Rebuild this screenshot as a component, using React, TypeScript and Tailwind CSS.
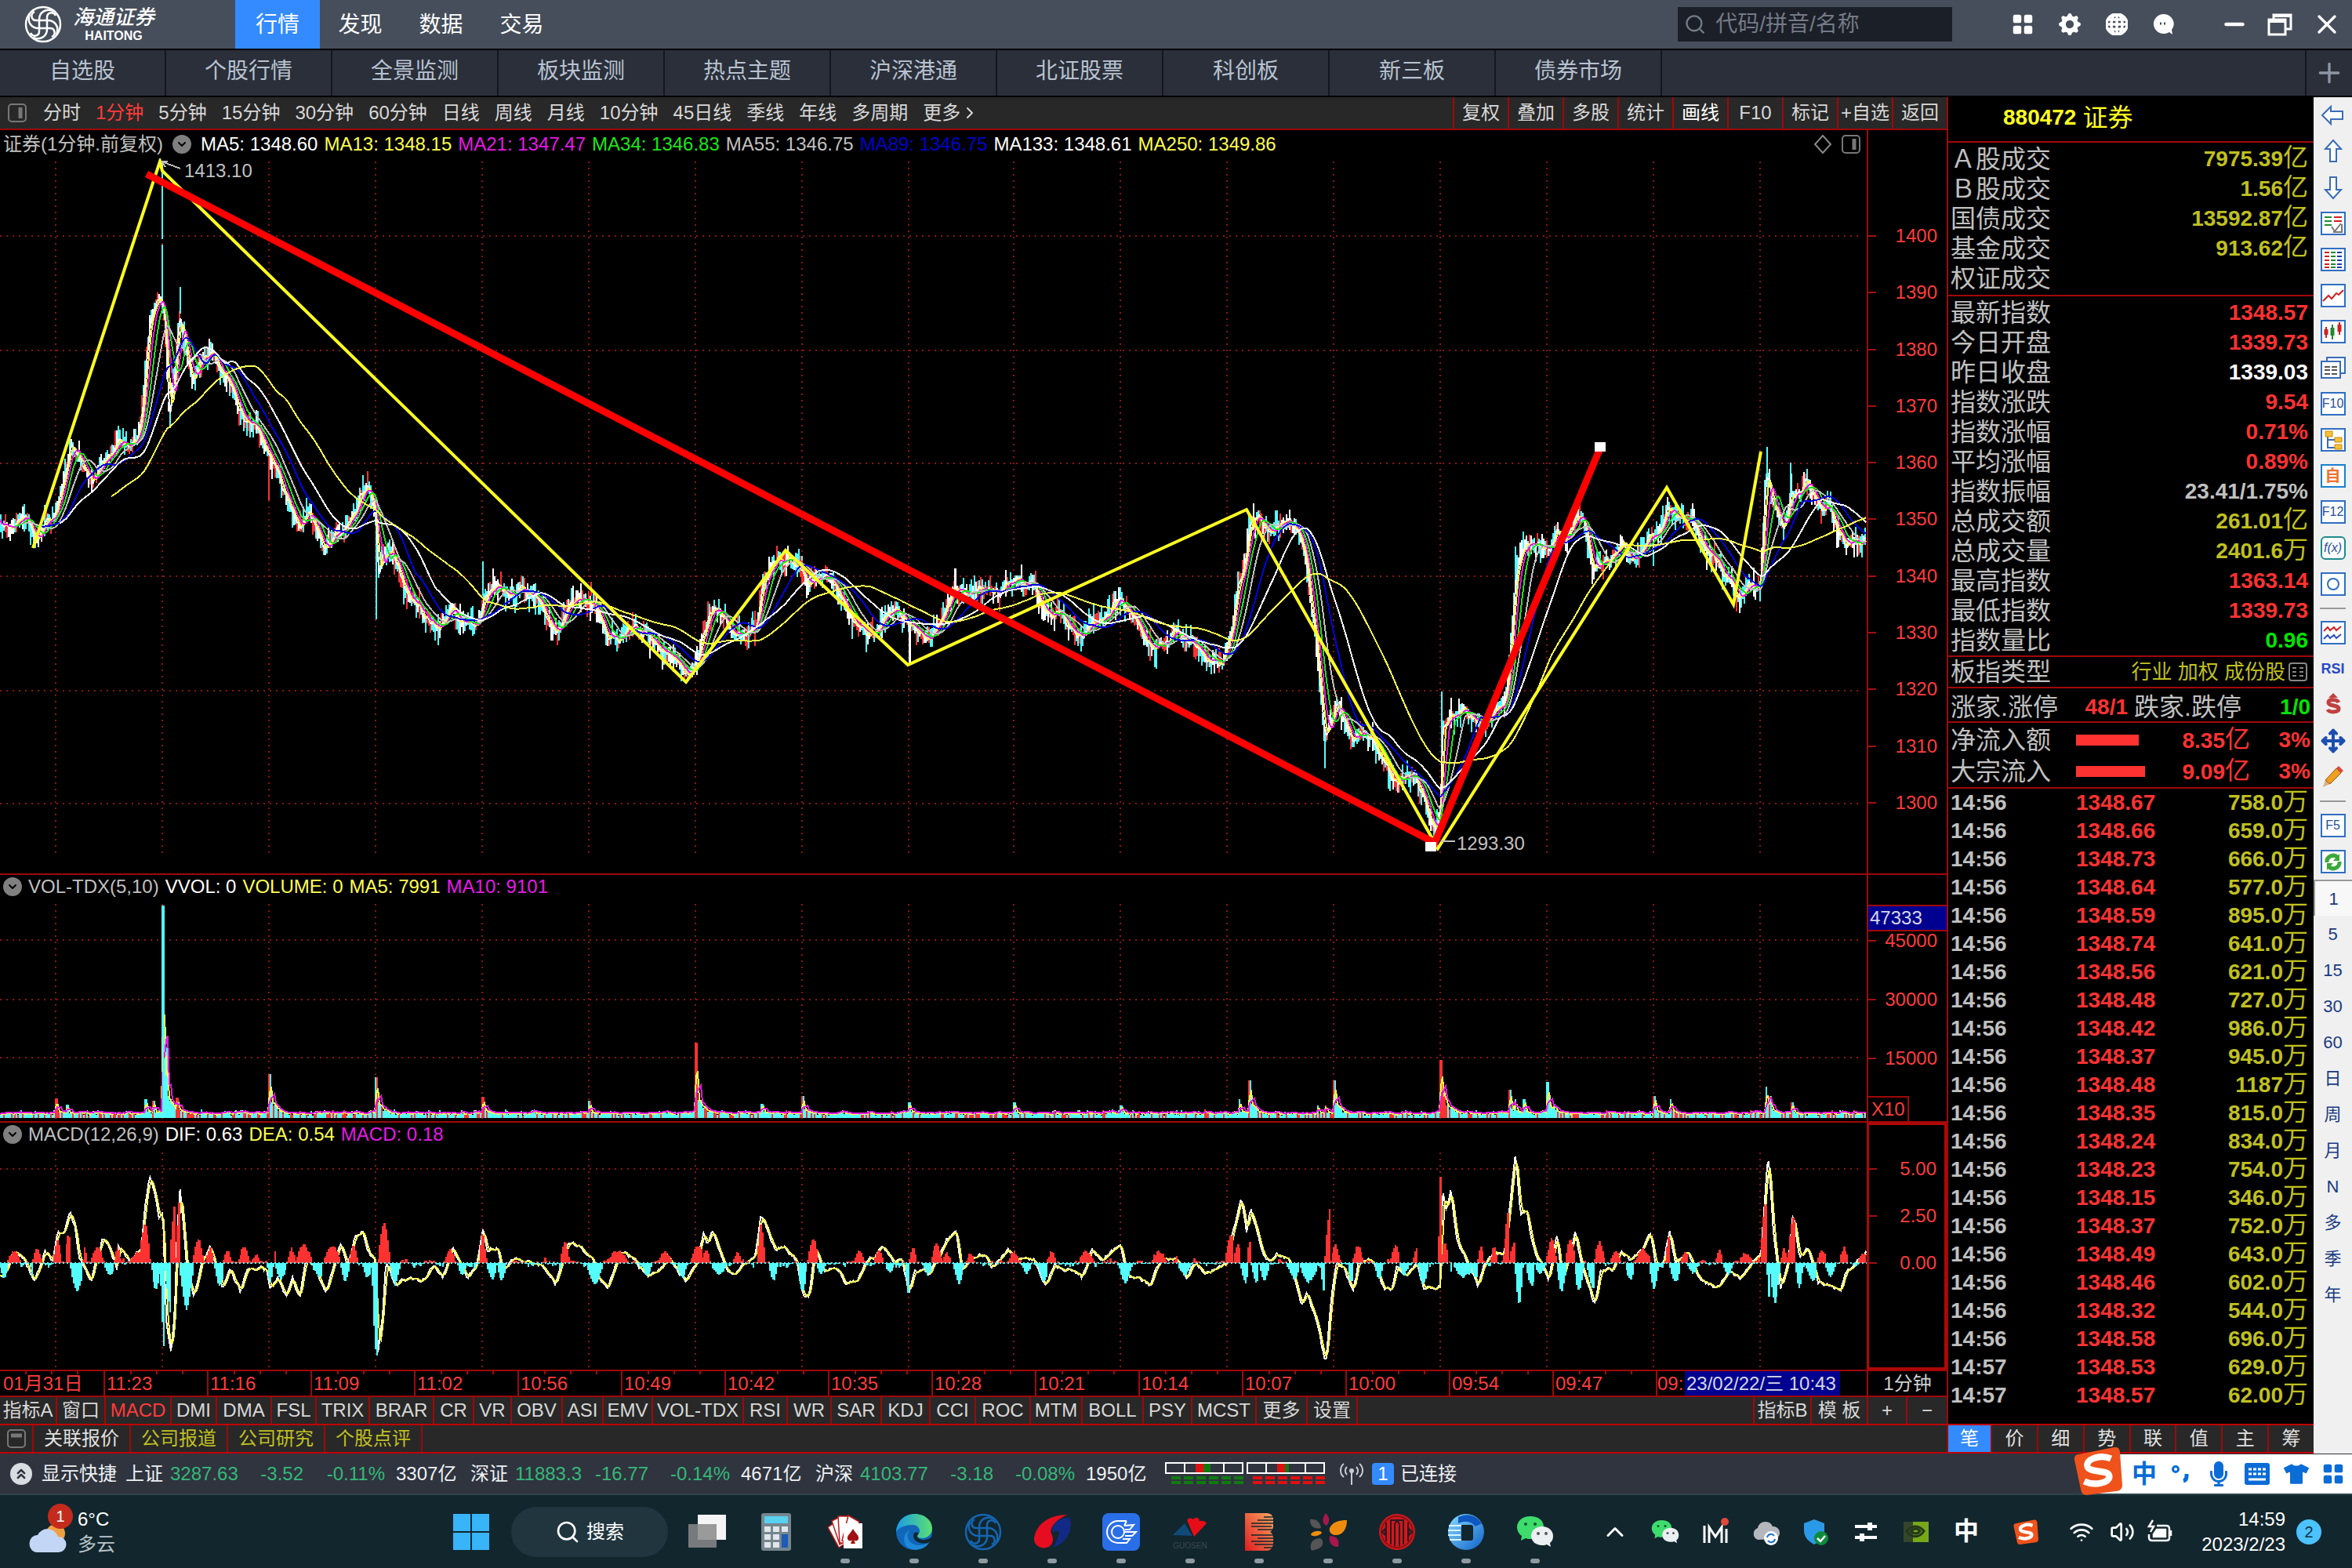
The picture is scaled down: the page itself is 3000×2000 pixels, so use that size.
import React from "react";
import {
  ChevronDown,
  ChevronUp,
  ChevronsUp,
  Minus,
  Move,
  Plus,
  Search,
  Volume2,
  Wifi,
  X,
} from "lucide-react";
import { BsGearFill, BsGlobe, BsGridFill } from "react-icons/bs";
import { FaMicrophone, FaTshirt } from "react-icons/fa";

type Point = [number, number];
type Peak = [number, number, number];

/* ---------- data ---------- */

const mainTabs = ["行情", "发现", "数据", "交易"];
const marketTabs = ["自选股", "个股行情", "全景监测", "板块监测", "热点主题", "沪深港通", "北证股票", "科创板", "新三板", "债券市场"];
const periods = ["分时", "1分钟", "5分钟", "15分钟", "30分钟", "60分钟", "日线", "周线", "月线", "10分钟", "45日线", "季线", "年线", "多周期"];
const chartTools = ["复权", "叠加", "多股", "统计", "画线", "F10", "标记", "+自选", "返回"];

const maLegend = [
  { text: "MA5: 1348.60", color: "text-white" },
  { text: "MA13: 1348.15", color: "text-[#ffff50]" },
  { text: "MA21: 1347.47", color: "text-[#e619e6]" },
  { text: "MA34: 1346.83", color: "text-[#19e619]" },
  { text: "MA55: 1346.75", color: "text-[#c0c0c0]" },
  { text: "MA89: 1346.75", color: "text-[#0202c8]" },
  { text: "MA133: 1348.61", color: "text-white" },
  { text: "MA250: 1349.86", color: "text-[#ffff50]" },
];

const volLegend = [
  { text: "VVOL: 0", color: "text-white" },
  { text: "VOLUME: 0", color: "text-[#ffff50]" },
  { text: "MA5: 7991", color: "text-[#ffff50]" },
  { text: "MA10: 9101", color: "text-[#e619e6]" },
];

const macdLegend = [
  { text: "DIF: 0.63", color: "text-white" },
  { text: "DEA: 0.54", color: "text-[#ffff50]" },
  { text: "MACD: 0.18", color: "text-[#e619e6]" },
];

const priceScale = ["1400", "1390", "1380", "1370", "1360", "1350", "1340", "1330", "1320", "1310", "1300"];
const times = ["01月31日", "11:23", "11:16", "11:09", "11:02", "10:56", "10:49", "10:42", "10:35", "10:28", "10:21", "10:14", "10:07", "10:00", "09:54", "09:47"];

const indicators = [
  { name: "指标A", width: "w-[73px]" },
  { name: "窗口", width: "w-[62px]" },
  { name: "MACD", width: "w-[84px]" },
  { name: "DMI", width: "w-[58px]" },
  { name: "DMA", width: "w-[70px]" },
  { name: "FSL", width: "w-[57px]" },
  { name: "TRIX", width: "w-[68px]" },
  { name: "BRAR", width: "w-[82px]" },
  { name: "CR", width: "w-[51px]" },
  { name: "VR", width: "w-[48px]" },
  { name: "OBV", width: "w-[65px]" },
  { name: "ASI", width: "w-[52px]" },
  { name: "EMV", width: "w-[63px]" },
  { name: "VOL-TDX", width: "w-[116px]" },
  { name: "RSI", width: "w-[56px]" },
  { name: "WR", width: "w-[56px]" },
  { name: "SAR", width: "w-[64px]" },
  { name: "KDJ", width: "w-[62px]" },
  { name: "CCI", width: "w-[58px]" },
  { name: "ROC", width: "w-[70px]" },
  { name: "MTM", width: "w-[66px]" },
  { name: "BOLL", width: "w-[78px]" },
  { name: "PSY", width: "w-[62px]" },
  { name: "MCST", width: "w-[82px]" },
  { name: "更多", width: "w-[65px]" },
  { name: "设置", width: "w-[64px]" },
];

const RED = "text-[#ff3232]";
const OLIVE = "text-[#c0c020]";
const GREEN = "text-[#00e600]";
const SILVER = "text-[#c0c0c0]";

const turnover = [
  { label: "Ａ股成交", value: "7975.39", unit: "亿", color: OLIVE },
  { label: "Ｂ股成交", value: "1.56", unit: "亿", color: OLIVE },
  { label: "国债成交", value: "13592.87", unit: "亿", color: OLIVE },
  { label: "基金成交", value: "913.62", unit: "亿", color: OLIVE },
  { label: "权证成交", value: "", unit: "", color: OLIVE },
];

const indexRows = [
  { label: "最新指数", value: "1348.57", unit: "", color: RED },
  { label: "今日开盘", value: "1339.73", unit: "", color: RED },
  { label: "昨日收盘", value: "1339.03", unit: "", color: "text-white" },
  { label: "指数涨跌", value: "9.54", unit: "", color: RED },
  { label: "指数涨幅", value: "0.71%", unit: "", color: RED },
  { label: "平均涨幅", value: "0.89%", unit: "", color: RED },
  { label: "指数振幅", value: "23.41/1.75%", unit: "", color: SILVER },
  { label: "总成交额", value: "261.01", unit: "亿", color: OLIVE },
  { label: "总成交量", value: "2401.6", unit: "万", color: OLIVE },
  { label: "最高指数", value: "1363.14", unit: "", color: RED },
  { label: "最低指数", value: "1339.73", unit: "", color: RED },
  { label: "指数量比", value: "0.96", unit: "", color: GREEN },
];

const ticks = [
  ["14:56", "1348.67", "758.0"],
  ["14:56", "1348.66", "659.0"],
  ["14:56", "1348.73", "666.0"],
  ["14:56", "1348.64", "577.0"],
  ["14:56", "1348.59", "895.0"],
  ["14:56", "1348.74", "641.0"],
  ["14:56", "1348.56", "621.0"],
  ["14:56", "1348.48", "727.0"],
  ["14:56", "1348.42", "986.0"],
  ["14:56", "1348.37", "945.0"],
  ["14:56", "1348.48", "1187"],
  ["14:56", "1348.35", "815.0"],
  ["14:56", "1348.24", "834.0"],
  ["14:56", "1348.23", "754.0"],
  ["14:56", "1348.15", "346.0"],
  ["14:56", "1348.37", "752.0"],
  ["14:56", "1348.49", "643.0"],
  ["14:56", "1348.46", "602.0"],
  ["14:56", "1348.32", "544.0"],
  ["14:56", "1348.58", "696.0"],
  ["14:57", "1348.53", "629.0"],
  ["14:57", "1348.57", "62.00"],
];

const indexes = [
  { name: "上证", value: "3287.63", change: "-3.52", pct: "-0.11%", amount: "3307亿" },
  { name: "深证", value: "11883.3", change: "-16.77", pct: "-0.14%", amount: "4671亿" },
  { name: "沪深", value: "4103.77", change: "-3.18", pct: "-0.08%", amount: "1950亿" },
];

/* ---------- chart series ---------- */

const W = 2381;
const gridX = [71, 207, 343, 479, 615, 751, 887, 1023, 1159, 1293, 1429, 1565, 1701, 1837, 1973, 2109, 2245];

const priceKnots: Point[] = [
  [0, 665], [10, 672], [25, 660], [38, 668], [44, 692], [55, 672], [68, 660], [75, 630], [82, 610], [90, 568], [100, 585], [110, 600],
  [118, 610], [130, 580], [140, 590], [150, 565], [165, 572], [175, 560], [182, 520], [187, 450], [192, 405], [198, 395], [204, 378],
  [210, 410], [216, 535], [222, 480], [229, 402], [235, 430], [245, 482], [255, 460], [262, 452], [270, 450], [280, 470], [295, 495],
  [305, 525], [318, 535], [330, 555], [342, 580], [352, 600], [360, 625], [370, 645], [382, 672], [395, 655], [405, 680], [413, 704],
  [425, 690], [440, 680], [450, 650], [458, 635], [464, 620], [474, 625], [479, 650], [482, 735], [488, 705], [496, 705], [510, 735],
  [525, 765], [540, 785], [560, 802], [575, 778], [585, 785], [600, 805], [612, 790], [618, 760], [625, 755], [635, 748], [648, 768],
  [665, 760], [680, 758], [690, 770], [700, 790], [710, 808], [722, 785], [735, 765], [750, 765], [760, 780], [775, 810], [790, 805],
  [800, 792], [815, 800], [830, 820], [845, 835], [860, 835], [870, 855], [878, 864], [887, 850], [895, 820], [905, 785], [920, 790],
  [932, 810], [950, 810], [965, 800], [972, 740], [980, 728], [990, 718], [1005, 715], [1020, 718], [1030, 755], [1040, 735], [1055, 740],
  [1075, 765], [1090, 805], [1112, 810], [1130, 785], [1145, 788], [1160, 795], [1185, 812], [1200, 785], [1210, 765], [1218, 748],
  [1230, 760], [1245, 758], [1260, 752], [1275, 758], [1290, 742], [1300, 740], [1315, 748], [1325, 755], [1340, 780], [1360, 795],
  [1380, 812], [1400, 795], [1420, 775], [1429, 763], [1440, 785], [1455, 805], [1470, 830], [1490, 815], [1505, 808], [1520, 825],
  [1540, 840], [1560, 843], [1568, 820], [1573, 790], [1580, 740], [1590, 705], [1594, 668], [1605, 668], [1615, 678], [1630, 668],
  [1642, 664], [1655, 675], [1665, 710], [1672, 770], [1680, 830], [1690, 940], [1697, 925], [1705, 905], [1715, 925], [1725, 945],
  [1735, 935], [1750, 945], [1760, 970], [1775, 995], [1790, 985], [1805, 1000], [1815, 1020], [1825, 1045], [1832, 1055], [1837, 1030],
  [1839, 930], [1848, 905], [1860, 908], [1875, 912], [1890, 928], [1905, 905], [1920, 900], [1927, 820], [1932, 750], [1938, 715],
  [1945, 700], [1960, 695], [1975, 700], [1985, 670], [1995, 690], [2010, 660], [2020, 665], [2032, 725], [2045, 710], [2060, 718],
  [2070, 690], [2080, 722], [2095, 700], [2105, 682], [2115, 680], [2125, 645], [2135, 660], [2150, 660], [2160, 670], [2175, 690],
  [2190, 720], [2205, 745], [2215, 760], [2230, 750], [2245, 746], [2252, 605], [2256, 615], [2262, 650], [2275, 680], [2285, 630],
  [2290, 640], [2300, 622], [2308, 620], [2320, 650], [2335, 652], [2345, 688], [2360, 690], [2372, 690], [2381, 685],
];

const zigzag = "M42 699L204 206L207 218L875 870L1002 702L1158 848L1590 650L1834 1082L2126 622L2211 771L2246 576";

const volumePeaks: Point[] = [
  [71, 25], [85, 17], [185, 24], [195, 22], [207, 271], [211, 90], [225, 26], [343, 56], [479, 52], [615, 27], [751, 22], [887, 96],
  [971, 18], [1023, 28], [1159, 20], [1293, 20], [1429, 16], [1580, 24], [1593, 48], [1680, 16], [1690, 16], [1701, 48], [1837, 74],
  [1842, 34], [1925, 36], [1932, 24], [1943, 24], [1973, 46], [1982, 18], [2109, 28], [2130, 24], [2252, 40], [2257, 28], [2285, 20],
];

const difKnots: Point[] = [
  [5, 735], [28, 670], [48, 685], [68, 745], [90, 665], [105, 690], [115, 610], [128, 610], [140, 560], [150, 600], [158, 690],
  [182, 750], [205, 625], [222, 665], [234, 710], [237, 650], [262, 690], [282, 655], [290, 540], [299, 450], [308, 490], [318, 570],
  [326, 560], [332, 860], [342, 955], [350, 840], [353, 640], [360, 490], [370, 640], [375, 740], [388, 795], [405, 690], [420, 650],
  [445, 765], [460, 720], [480, 780], [495, 715], [515, 710], [535, 720], [540, 770], [555, 740], [573, 790], [585, 745], [600, 790],
  [612, 690], [630, 710], [650, 785], [665, 715], [680, 635], [695, 700], [712, 615], [725, 605], [735, 660], [750, 690], [755, 960],
  [765, 860], [772, 700], [790, 760], [815, 740], [840, 750], [870, 705], [885, 735], [905, 655], [935, 740], [955, 690], [965, 595],
  [975, 655], [995, 645], [1005, 720], [1030, 675], [1060, 700], [1085, 705], [1110, 755], [1135, 645], [1160, 650], [1185, 690],
  [1195, 745], [1215, 760], [1240, 665], [1265, 680], [1295, 740], [1325, 710], [1335, 680], [1372, 750], [1395, 680], [1408, 605],
  [1415, 640], [1424, 600], [1440, 660], [1460, 725], [1490, 700], [1510, 680], [1522, 555], [1535, 600], [1550, 660], [1568, 650],
  [1593, 690], [1606, 790], [1618, 790], [1630, 640], [1648, 720], [1678, 720], [1693, 755], [1713, 755], [1728, 710], [1768, 650],
  [1788, 690], [1803, 685], [1818, 780], [1830, 710], [1858, 730], [1878, 680], [1893, 625], [1913, 610], [1923, 720], [1943, 685],
  [1973, 675], [1983, 715], [2016, 660], [2038, 690], [2068, 690], [2090, 760], [2108, 705], [2133, 715], [2163, 740], [2183, 665],
  [2208, 685], [2240, 640], [2253, 740], [2273, 740], [2301, 760], [2323, 680], [2353, 685], [2373, 735], [2388, 700], [2413, 730],
  [2438, 700], [2453, 700], [2463, 620], [2483, 510], [2493, 600], [2501, 530], [2528, 680], [2543, 690], [2553, 675], [2578, 680],
  [2603, 810], [2613, 780], [2633, 860], [2651, 990], [2663, 780], [2673, 690], [2688, 710], [2706, 780], [2718, 690], [2748, 690],
  [2768, 770], [2783, 770], [2793, 700], [2813, 740], [2833, 700], [2848, 770], [2880, 765], [2884, 480], [2893, 550], [2901, 490],
  [2913, 620], [2933, 690], [2956, 760], [2968, 700], [2988, 660], [3008, 680], [3018, 560], [3031, 375], [3041, 560], [3053, 550],
  [3068, 660], [3098, 745], [3113, 605], [3124, 740], [3136, 690], [3151, 610], [3161, 690], [3188, 820], [3201, 720], [3226, 715],
  [3241, 665], [3261, 690], [3286, 660], [3301, 615], [3311, 700], [3326, 690], [3339, 600], [3351, 700], [3376, 660], [3396, 740],
  [3431, 765], [3456, 725], [3481, 740], [3501, 690], [3521, 680], [3536, 385], [3546, 600], [3561, 770], [3576, 700], [3586, 560],
  [3598, 680], [3616, 650], [3636, 750], [3681, 765], [3691, 720], [3711, 700], [3731, 665],
];

// x, height (up is positive), half width
const macdPeaks: Peak[] = [
  [8, -40, 8], [28, 35, 12], [68, -55, 7], [75, 40, 8], [115, 65, 7], [137, 85, 6], [155, -80, 12], [170, 45, 4], [195, 45, 12],
  [220, -35, 10], [235, 45, 6], [275, 30, 14], [290, 110, 10], [312, -75, 8], [331, -270, 9], [342, -150, 10], [352, 180, 10],
  [361, 200, 8], [373, -130, 12], [397, 70, 10], [420, 45, 6], [440, -65, 10], [455, 35, 8], [488, 45, 10], [512, 25, 8], [541, -55, 6],
  [553, 55, 4], [562, -45, 10], [583, 40, 8], [608, 55, 14], [640, -40, 14], [665, 50, 16], [690, -55, 8], [708, 50, 8], [735, -40, 8],
  [753, -270, 8], [768, 115, 10], [790, -60, 9], [900, 40, 10], [925, -35, 8], [965, 90, 6], [985, -45, 10], [1003, -50, 8],
  [1130, 60, 8], [1190, -60, 14], [1235, 35, 20], [1295, -35, 8], [1330, 35, 12], [1365, -40, 9], [1397, 50, 14], [1412, 40, 8],
  [1438, -35, 14], [1475, 30, 8], [1522, 110, 7], [1547, -50, 8], [1605, -85, 7], [1626, 70, 10], [1643, -30, 8], [1718, 35, 10],
  [1758, 40, 9], [1780, -25, 8], [1818, -95, 6], [1826, 45, 7], [1856, -35, 8], [1873, 55, 9], [1893, 30, 8], [1918, -60, 9],
  [1940, 25, 8], [2028, 35, 10], [2053, -30, 8], [2088, -50, 10], [2103, 35, 8], [2173, 35, 14], [2250, -55, 12], [2318, 35, 14],
  [2358, 35, 8], [2370, -35, 12], [2463, 80, 12], [2476, 50, 8], [2490, -55, 8], [2499, 65, 4], [2513, -55, 9], [2528, -50, 9],
  [2588, -45, 12], [2618, -55, 16], [2651, -100, 9], [2660, 160, 9], [2671, 50, 8], [2703, -50, 7], [2716, 50, 9], [2758, -45, 8],
  [2791, 50, 9], [2808, -35, 8], [2833, 40, 7], [2846, -60, 9], [2883, 300, 5], [2889, 60, 6], [2910, -95, 8], [2928, -40, 20],
  [2953, -40, 10], [2962, 45, 6], [2988, 45, 6], [3018, 150, 10], [3028, 60, 8], [3038, -120, 7], [3063, -65, 9], [3080, -30, 10],
  [3103, 70, 9], [3123, -80, 8], [3141, 70, 9], [3158, -80, 8], [3186, -75, 11], [3199, 60, 9], [3231, 35, 9], [3261, -45, 9],
  [3286, 40, 16], [3308, -75, 8], [3339, 85, 7], [3351, -55, 11], [3371, 30, 9], [3386, -30, 10], [3439, 35, 7], [3456, -30, 10],
  [3491, 30, 12], [3530, 175, 8], [3543, -150, 8], [3550, -110, 9], [3568, 40, 7], [3586, 130, 9], [3598, -75, 7], [3626, -50, 14],
  [3644, 35, 9], [3661, -40, 10], [3688, 45, 8], [3726, 30, 9],
];

const rng = (seed: number) => () => {
  seed = (seed * 1664525 + 1013904223) % 4294967296;
  return seed / 4294967296;
};

const interpolate = (knots: Point[], x: number) => {
  const i = knots.findIndex((k) => k[0] >= x);
  if (i <= 0) return i === 0 ? knots[0][1] : knots[knots.length - 1][1];
  const [x0, y0] = knots[i - 1];
  const [x1, y1] = knots[i];
  return y0 + ((y1 - y0) * (x - x0)) / (x1 - x0);
};

const average = (data: number[], size: number) =>
  data.map((_, i) => {
    const part = data.slice(Math.max(0, i - size + 1), i + 1);
    return part.reduce((a, b) => a + b, 0) / part.length;
  });

const toPath = (data: number[], from = 0, step = 1) =>
  data
    .map((y, i) => (i < from ? "" : `${i === from ? "M" : "L"}${i * step} ${y.toFixed(1)}`))
    .join("");

const buildPrice = () => {
  const rand = rng(7);
  let drift = 0;
  const series: number[] = [];
  for (let x = 0; x < W; x++) {
    drift = drift * 0.82 + (rand() - 0.5) * 10;
    series.push(interpolate(priceKnots, x) + drift);
  }
  const bars = ["", "", ""];
  for (let x = 1; x < W; x += 2) {
    const y = series[x];
    const up = 4 + rand() * rand() * 22;
    const down = 4 + rand() * rand() * 22;
    const pick = rand();
    bars[pick < 0.45 ? 0 : pick < 0.7 ? 1 : 2] += `M${x} ${(y - up).toFixed(0)}V${(y + down).toFixed(0)}`;
  }
  return { series, bars };
};

const buildVolume = () => {
  const rand = rng(21);
  const heights: number[] = [];
  for (let x = 0; x < W; x++) {
    let h = 3 + rand() * rand() * 8;
    volumePeaks.forEach(([px, ph]) => {
      const d = x - px;
      if (d >= 0 && d < 2) h = Math.max(h, ph);
      else if (d >= 2 && d < 60) h = Math.max(h, Math.min(ph, 70) * 0.5 * Math.exp(-d / 14) * (0.6 + rand() * 0.5));
      else if (d < 0 && d > -10) h = Math.max(h, Math.min(ph, 30) * 0.3 * rand());
    });
    heights.push(h);
  }
  const bars = ["", ""];
  for (let x = 1; x < W; x += 2) {
    const h = Math.max(heights[x], heights[x - 1]);
    const red = [343, 615, 887, 1593, 1701, 1837, 1925].some((p) => Math.abs(p - x) < 2);
    bars[red || (h < 200 && rand() < 0.25) ? 1 : 0] += `M${x} 1426V${(1426 - h).toFixed(0)}`;
  }
  return { heights, bars };
};

const buildMacd = () => {
  const rand = rng(5);
  const dif: number[] = [];
  let wobble = 0;
  for (let x = 0; x < 3733; x += 3) {
    wobble = wobble * 0.7 + (rand() - 0.5) * 12;
    dif.push(interpolate(difKnots, x) + wobble);
  }
  let up = "";
  let down = "";
  for (let x = 1; x < 3733; x += 3) {
    let h = Math.sin(x / 9) * 12 * rand() + (rand() - 0.5) * 12;
    macdPeaks.forEach(([px, ph, half]) => {
      const d = Math.abs(x - px) / (half * 1.2);
      if (d < 1) h = ph * (1 - Math.pow(d, 1.6)) + (rand() - 0.5) * 8;
    });
    if (h > 0) up += `M${x} 697V${(697 - h).toFixed(0)}`;
    else down += `M${x} 697V${(697 - h).toFixed(0)}`;
  }
  return { dif, dea: average(dif, 3), up, down };
};

const price = buildPrice();
const volume = buildVolume();
const macd = buildMacd();

const movingAverages = [
  { size: 3, color: "#ffffff" },
  { size: 7, color: "#ffff50" },
  { size: 12, color: "#e619e6" },
  { size: 19, color: "#19e619" },
  { size: 31, color: "#c0c0c0" },
  { size: 51, color: "#0202e0" },
  { size: 76, color: "#ffffff" },
  { size: 142, color: "#ffff50" },
];

/* ---------- charts ---------- */

const Grid: React.FC<{ top: number; bottom: number; rows: number[] }> = ({ top, bottom, rows }) => (
  <g stroke="#8c1414" strokeWidth="2" strokeDasharray="2 6">
    {gridX.map((x) => (
      <path key={x} d={`M${x} ${top}V${bottom}`} />
    ))}
    {rows.map((y) => (
      <path key={y} d={`M0 ${y}H2372`} />
    ))}
  </g>
);

const PriceChart = () => (
  <svg className="block h-[912px] w-full" viewBox="0 202 2381 912" preserveAspectRatio="none" fill="none" shapeRendering="crispEdges">
    <Grid top={206} bottom={1088} rows={[301, 447, 591, 735, 881, 1025]} />
    <path d={price.bars[0]} stroke="#54fcfc" strokeWidth="2" />
    <path d={price.bars[1]} stroke="#ff3232" strokeWidth="2" />
    <path d={price.bars[2]} stroke="#ffffff" strokeWidth="2" />
    <path d="M207 206V305M207 312V400M230 366V400M480 640V790M616 716V760M1839 882V1040M1933 697V740M1690 930V980M2254 570V610M2284 590V640M2305 598V620M2109 700V722M960 806V780" stroke="#54fcfc" strokeWidth="2" />
    <path d="M343 585V638M754 742V760M1023 715V745" stroke="#ff3232" strokeWidth="2" />
    <path d="M1160 800V846M1218 725V750" stroke="#ffffff" strokeWidth="3" />
    {movingAverages.map(({ size, color }) => (
      <path key={size} d={toPath(average(price.series, size), size > 12 ? size : 0)} stroke={color} strokeWidth="2" />
    ))}
    <path d={zigzag} stroke="#ffff20" strokeWidth="4" shapeRendering="auto" />
    <path d="M187 222L1830 1075L2040 574" stroke="#ff0000" strokeWidth="9" shapeRendering="auto" />
    <path d="M1818 1074h14v12h-14zM2034 564h14v12h-14z" fill="#ffffff" />
    <path d="M206 206l24 9M206 206h8M206 206l5 7M1838 1073h18" stroke="#c0c0c0" strokeWidth="2" />
    <text x="235" y="226" fill="#c0c0c0" fontSize="24">1413.10</text>
    <text x="1858" y="1084" fill="#c0c0c0" fontSize="24">1293.30</text>
  </svg>
);

const VolumeChart = () => (
  <svg className="block h-[284px] w-full" viewBox="0 1146 2381 284" preserveAspectRatio="none" fill="none" shapeRendering="crispEdges">
    <Grid top={1153} bottom={1428} rows={[1199, 1275, 1349]} />
    <path d={volume.bars[0]} stroke="#54fcfc" strokeWidth="2" />
    <path d={volume.bars[1]} stroke="#ff3232" strokeWidth="2" />
    <path d={toPath(average(volume.heights, 4).map((h) => 1425 - Math.min(h, 130)))} stroke="#ffff50" strokeWidth="2" />
    <path d={toPath(average(volume.heights, 8).map((h) => 1424 - h))} stroke="#e619e6" strokeWidth="2" />
    <path d="M208 1155V1426" stroke="#54fcfc" strokeWidth="2" />
  </svg>
);

const MacdChart = () => (
  <svg className="block h-[284px] w-full" viewBox="0 363 3733 636" preserveAspectRatio="none" fill="none" shapeRendering="crispEdges">
    <g stroke="#8c1414" strokeWidth="2" strokeDasharray="2 6">
      {gridX.map((x) => (
        <path key={x} d={`M${x * 1.568} 380V995`} vectorEffect="non-scaling-stroke" />
      ))}
      <path d="M0 428H3720" vectorEffect="non-scaling-stroke" />
    </g>
    <path d={toPath(macd.dif, 0, 3)} stroke="#ffffff" strokeWidth="2" vectorEffect="non-scaling-stroke" />
    <path d={toPath(macd.dea, 0, 3)} stroke="#ffff50" strokeWidth="2" vectorEffect="non-scaling-stroke" />
    <path d={macd.up} stroke="#ff3232" strokeWidth="4" />
    <path d={macd.down} stroke="#54fcfc" strokeWidth="4" />
    <path d="M0 697H3733" stroke="#54fcfc" strokeWidth="2" strokeDasharray="2 3" vectorEffect="non-scaling-stroke" />
  </svg>
);

const Legend: React.FC<{ title: string; items: { text: string; color: string }[]; iconFirst?: boolean }> = ({ title, items, iconFirst }) => (
  <div className="flex h-[30px] items-center gap-2 pl-1 text-2xl leading-none whitespace-nowrap">
    <span className={iconFirst ? "order-2 text-[#c0c0c0]" : "order-1 text-[#c0c0c0]"}>{title}</span>
    <button aria-label="指标菜单" className={iconFirst ? "order-1 rounded-full bg-[#808080] text-black" : "order-2 mx-1 rounded-full bg-[#808080] text-black"}>
      <ChevronDown className="size-6 p-1" strokeWidth={3} />
    </button>
    {items.map((item) => (
      <span key={item.text} className={`order-3 ${item.color}`}>{item.text}</span>
    ))}
  </div>
);

const Tick = () => <i className="absolute left-0 h-[2px] w-[10px] bg-[#a01010]" />;

/* ---------- header ---------- */

const HaitongMark: React.FC<{ className?: string }> = ({ className }) => (
  <svg className={className} viewBox="0 0 48 48" fill="none" stroke="currentColor" strokeWidth="2.500">
    <circle cx="24" cy="24" r="22" />
    {[0, 90, 180, 270].map((angle) => (
      <path key={angle} d="M19 33V18C19 9 27 3 37 7M19 33c0 6-8 8-11 2" transform={`rotate(${angle} 24 24)`} />
    ))}
  </svg>
);

const Header = () => (
  <header className="flex h-16 items-center border-b-2 border-black bg-[#464e5b] text-white">
    <div className="flex w-[300px] items-center gap-[14px] pl-[31px]">
      <HaitongMark className="size-12" />
      <div className="flex flex-col items-center gap-1">
        <span className="text-[26px] leading-[26px] font-medium italic">海通证券</span>
        <span className="text-base leading-[14px] font-bold">HAITONG</span>
      </div>
    </div>
    <nav className="flex h-full">
      {mainTabs.map((tab, i) => (
        <a key={tab} href="#" className={i === 0 ? "flex w-[108px] items-center justify-center bg-[#338bff] pt-[2px] text-[28px]" : "flex w-[103px] items-center justify-center pt-[2px] text-[28px]"}>
          {tab}
        </a>
      ))}
    </nav>
    <label className="ml-auto flex h-11 w-[350px] items-center gap-3 bg-[#1b1f28] pl-2 text-[#747a86]">
      <Search className="size-8" />
      <input aria-label="搜索" placeholder="代码/拼音/名称" className="w-full bg-transparent text-[28px] placeholder:text-[#747a86]" />
    </label>
    <div className="ml-[76px] flex items-center gap-8">
      <button aria-label="应用"><BsGridFill className="size-7" /></button>
      <button aria-label="设置"><BsGearFill className="size-7" /></button>
      <button aria-label="网络"><BsGlobe className="size-7" strokeWidth={1} /></button>
      <button aria-label="消息">
        <svg className="size-7" viewBox="0 0 28 28" fill="currentColor">
          <path d="M14 1a13 12.500 0 1 0 7 23l4 3-1-6A13 12.500 0 0 0 14 1z" />
          <path d="M9 13h2M14 13h2" stroke="#464e5b" strokeWidth="3" />
        </svg>
      </button>
    </div>
    <div className="mr-3 ml-[58px] flex items-center gap-6">
      <button aria-label="最小化"><Minus className="size-9" strokeWidth={3} /></button>
      <button aria-label="还原">
        <svg className="size-8" viewBox="0 0 32 32" fill="none" stroke="currentColor" strokeWidth="3">
          <path d="M8 10V4h22v18h-6M2 10h21v19H2z" />
          <path d="M8 5h22M2 12h21" strokeWidth="4" />
        </svg>
      </button>
      <button aria-label="关闭"><X className="size-10" strokeWidth={2} /></button>
    </div>
  </header>
);

const MarketTabs = () => (
  <nav className="flex h-[60px] border-b-2 border-black bg-[#2a2f3a] text-[28px] text-[#b8c2d0]">
    {marketTabs.map((tab) => (
      <a key={tab} href="#" className="flex w-[212px] items-center justify-center border-r-2 border-[#14171d] pb-1">{tab}</a>
    ))}
    <button aria-label="添加" className="ml-auto flex w-[60px] items-center justify-center border-l-2 border-[#14171d] text-[#8e96a3]">
      <Plus className="size-10" strokeWidth={2} />
    </button>
  </nav>
);

/* ---------- left side ---------- */

const PanelIcon: React.FC<{ className?: string }> = ({ className }) => (
  <svg className={className} viewBox="0 0 24 24" fill="none" stroke="#777" strokeWidth="2">
    <rect x="1" y="1" width="22" height="22" rx="4" />
    <path d="M16 5v14" strokeWidth="5" />
  </svg>
);

const PeriodBar = () => (
  <div className="flex h-[42px] border-b-2 border-[#a00808] bg-[#282828] text-2xl whitespace-nowrap text-[#d8d8d8]">
    <div className="flex flex-1 items-center gap-[19px] pl-[10px]">
      <button aria-label="侧栏" className="mr-[2px]"><PanelIcon className="size-6" /></button>
      {periods.map((p) => (
        <button key={p} className={p === "1分钟" ? "text-[#ff3c3c]" : ""}>{p}</button>
      ))}
      <button className="flex items-center">更多<ChevronDown className="size-6 -rotate-90" /></button>
    </div>
    {chartTools.map((t) => (
      <button key={t} className={t === "画线" ? "w-[70px] border-l-2 border-[#a00808] text-white" : "w-[70px] border-l-2 border-[#a00808]"}>{t}</button>
    ))}
  </div>
);

const PricePane = () => (
  <section className="flex h-[950px] border-b-2 border-[#a00808]">
    <div className="min-w-0 flex-1">
      <div className="flex h-9 items-center justify-between pr-2">
        <Legend title="证券(1分钟.前复权)" items={maLegend} />
        <div className="flex items-center gap-3">
          <svg className="size-6" viewBox="0 0 24 24" fill="none" stroke="#888" strokeWidth="2"><path d="M12 1l10 11-10 11L2 12z" /></svg>
          <PanelIcon className="size-6" />
        </div>
      </div>
      <PriceChart />
    </div>
    <div className="w-[102px] border-l-2 border-[#a00808] pt-[99px]">
      <div className="flex h-[795px] flex-col">
        {priceScale.map((p) => (
          <div key={p} className="relative flex flex-1 items-center justify-end pr-3 text-2xl text-[#ff3c3c]"><Tick />{p}</div>
        ))}
      </div>
    </div>
  </section>
);

const VolumePane = () => (
  <section className="flex h-[316px] border-b-2 border-[#a00808]">
    <div className="min-w-0 flex-1">
      <Legend title="VOL-TDX(5,10)" items={volLegend} iconFirst />
      <VolumeChart />
    </div>
    <div className="flex w-[102px] flex-col border-l-2 border-[#a00808] pt-[38px] text-2xl leading-8 text-[#ff3c3c]">
      <div className="h-[34px] shrink-0 border-y-2 border-[#a00808] bg-[#000090] pl-[2px] leading-[30px] text-[#d8d8e8]">47333</div>
      <div className="-mt-[26px] flex h-[225px] shrink-0 flex-col">
        {["45000", "30000", "15000"].map((v) => (
          <div key={v} className="relative flex flex-1 items-center justify-end pr-3"><Tick />{v}</div>
        ))}
      </div>
      <div className="mt-auto w-[52px] border-t-2 border-r-2 border-[#a00808] pl-1 leading-[30px]">X10</div>
    </div>
  </section>
);

const MacdPane = () => (
  <section className="flex h-[317px] border-b-2 border-[#a00808]">
    <div className="min-w-0 flex-1">
      <Legend title="MACD(12,26,9)" items={macdLegend} iconFirst />
      <MacdChart />
    </div>
    <div className="w-[102px] border-[3px] border-[#b00808] pt-[26px] text-2xl text-[#ff3c3c]">
      <div className="flex h-[180px] flex-col">
        {["5.00", "2.50", "0.00"].map((v) => (
          <div key={v} className="relative flex flex-1 items-center justify-end pr-[10px]"><Tick />{v}</div>
        ))}
      </div>
    </div>
  </section>
);

const TimeAxis = () => (
  <div className="flex h-[33px] border-b-2 border-[#a00808] text-2xl leading-[31px] whitespace-nowrap text-[#ff3c3c]">
    {times.map((t, i) => (
      <div key={t} className={i === 0 ? "relative w-[132px] pl-1" : "relative w-[132px] border-l-2 border-[#a00808] pl-[2px]"}>
        {t}
        <i className="absolute top-0 left-[32px] h-1 w-[2px] bg-[#a00808]" />
        <i className="absolute top-0 left-[65px] h-1 w-[2px] bg-[#a00808]" />
        <i className="absolute top-0 left-[98px] h-1 w-[2px] bg-[#a00808]" />
      </div>
    ))}
    <div className="w-[37px] overflow-hidden border-l-2 border-[#a00808]">09:</div>
    <div className="w-[198px] bg-[#000090] pl-[2px] text-[#d8d8e8]">23/02/22/三 10:43</div>
    <div className="ml-auto w-[102px] border-l-2 border-[#a00808] text-center text-[#d0d0d0]">1分钟</div>
  </div>
);

const IndicatorBar = () => (
  <div className="flex h-9 border-b-2 border-[#c00000] bg-[#282828] text-2xl leading-8 whitespace-nowrap text-[#d8d8d8]">
    {indicators.map(({ name, width }) => (
      <button key={name} className={`${width} shrink-0 border-r-2 border-[#a00808] ${name === "MACD" ? "text-[#ff3c3c]" : ""}`}>{name}</button>
    ))}
    <button className="ml-auto w-[73px] border-l-2 border-[#a00808]">指标B</button>
    <button className="w-[72px] border-l-2 border-[#a00808]">模 板</button>
    <button className="w-[50px] border-l-2 border-[#a00808]">+</button>
    <button className="w-[52px] border-l-2 border-[#a00808]">−</button>
  </div>
);

const NewsBar = () => (
  <div className="flex h-9 border-b-2 border-[#c00000] bg-[#282828] text-2xl text-[#c0c020]">
    <button aria-label="面板" className="flex w-[43px] items-center justify-center border-r-2 border-[#a00808]">
      <svg className="size-6" viewBox="0 0 24 24" fill="none" stroke="#777" strokeWidth="2"><rect x="1" y="1" width="22" height="22" rx="4" /><path d="M5 8h14" strokeWidth="5" /></svg>
    </button>
    <button className="w-[124px] border-r-2 border-[#a00808] text-[#e0e0e0]">关联报价</button>
    <button className="w-[124px] border-r-2 border-[#a00808]">公司报道</button>
    <button className="w-[124px] border-r-2 border-[#a00808]">公司研究</button>
    <button className="w-[124px] border-r-2 border-[#a00808]">个股点评</button>
  </div>
);

/* ---------- quote panel ---------- */

const QuoteTable: React.FC<{ rows: typeof turnover }> = ({ rows }) => (
  <table className="w-full">
    <tbody>
      {rows.map((r) => (
        <tr key={r.label} className="h-[38px]">
          <th className="p-0 pl-[3px] text-left text-[32px] leading-[38px] font-normal text-[#c0c0c0]">{r.label}</th>
          <td className={`p-0 pr-[7px] text-right text-[28px] leading-[38px] font-bold ${r.color}`}>
            {r.value}
            {r.unit && <span className="text-[32px] leading-none font-normal">{r.unit}</span>}
          </td>
        </tr>
      ))}
    </tbody>
  </table>
);

const QuotePanel = () => (
  <aside className="flex w-[468px] flex-col border-l-2 border-[#a00808] bg-black whitespace-nowrap">
    <h1 className="flex h-[58px] items-center gap-2 border-b-2 border-[#a00808] pb-1 pl-[70px] text-[28px] font-bold text-[#ffff20]">
      880472 <span className="text-[32px] font-normal">证券</span>
    </h1>
    <div className="border-b-2 border-[#a00808] py-[2px]"><QuoteTable rows={turnover} /></div>
    <div className="border-b-2 border-[#a00808] pt-[2px]"><QuoteTable rows={indexRows} /></div>
    <div className="flex h-10 items-center border-b-2 border-[#a00808] pr-2 pl-[3px] text-[32px] text-[#c0c0c0]">
      板指类型
      <span className="ml-auto text-[26px] text-[#c0c020]">行业 加权 成份股</span>
      <svg className="ml-1 size-6" viewBox="0 0 24 24" fill="none" stroke="#888" strokeWidth="2">
        <rect x="1" y="1" width="22" height="22" rx="3" /><path d="M5 7h5M5 12h5M5 17h5M14 7h5M14 12h5M14 17h5" />
      </svg>
    </div>
    <div className="grid h-11 grid-cols-[168px_58px_150px_1fr] items-center border-b-2 border-[#a00808] pr-1 pl-[3px] text-[32px] text-[#c0c0c0]">
      涨家.涨停
      <span className="text-right text-[28px] font-bold text-[#ff3232]">48/1</span>
      <span className="pl-2">跌家.跌停</span>
      <span className="text-right text-[28px] font-bold text-[#00e600]">1/0</span>
    </div>
    <div className="grid h-[84px] grid-cols-[160px_120px_102px_1fr] content-start items-center border-b-2 border-[#a00808] pt-[2px] pr-1 pl-[3px] text-[32px] leading-[38px] text-[#ff3232]">
      <span className="text-[#c0c0c0]">净流入额</span>
      <i className="h-[14px] w-20 bg-[#ff3232]" />
      <span className="text-right"><b className="text-[28px]">8.35</b>亿</span>
      <b className="text-right text-[28px]">3%</b>
      <span className="text-[#c0c0c0]">大宗流入</span>
      <i className="h-[14px] w-[88px] bg-[#ff3232]" />
      <span className="text-right"><b className="text-[28px]">9.09</b>亿</span>
      <b className="text-right text-[28px]">3%</b>
    </div>
    <table className="w-full text-[28px] leading-9 font-bold">
      <tbody>
        {ticks.map(([time, last, vol], i) => (
          <tr key={i} className="h-9">
            <td className="w-[163px] p-0 pl-[3px] text-[#c0c0c0]">{time}</td>
            <td className="p-0 text-[#ff3232]">{last}</td>
            <td className="p-0 pr-[7px] text-right text-[#c0c020]">{vol}<span className="text-[32px] leading-none font-normal">万</span></td>
          </tr>
        ))}
      </tbody>
    </table>
    <div className="mt-auto flex h-[38px] border-y-2 border-[#c00000] bg-[#282828] text-2xl text-[#e0e0e0]">
      {["笔", "价", "细", "势", "联", "值", "主", "筹"].map((t, i) => (
        <button key={t} className={i === 0 ? "w-[54px] bg-[#338bff] text-white" : "flex-1 border-l-2 border-[#a00808]"}>{t}</button>
      ))}
    </div>
  </aside>
);

/* ---------- tool strip ---------- */

const Boxed: React.FC<{ children?: React.ReactNode; stroke?: string }> = ({ children, stroke = "#2f6ec0" }) => (
  <svg className="size-8" viewBox="0 0 32 32" fill="none">
    <rect x="1" y="2" width="30" height="28" fill="#fff" stroke={stroke} strokeWidth="2" />
    {children}
  </svg>
);

const BoxedText: React.FC<{ text: string; orange?: boolean }> = ({ text, orange }) => (
  <span className={orange ? "flex h-[30px] w-8 items-center justify-center border-2 border-[#1a7fd0] bg-white text-xl leading-none font-bold text-[#f07030]" : "flex h-[30px] w-8 items-center justify-center border-2 border-[#2f6ec0] bg-white text-base leading-none text-[#1d4fa0]"}>
    {text}
  </span>
);

const toolIcons: [string, React.ReactNode][] = [
  ["后退", <svg className="size-8" viewBox="0 0 32 32" fill="#fff" stroke="#3a6cb8" strokeWidth="2"><path d="M2 16L13 5v6h15v10H13v6z" /></svg>],
  ["上移", <svg className="size-8" viewBox="0 0 32 32" fill="#fff" stroke="#3a6cb8" strokeWidth="2"><path d="M16 2l10 11h-6v16h-8V13H6z" /></svg>],
  ["下移", <svg className="size-8" viewBox="0 0 32 32" fill="#fff" stroke="#3a6cb8" strokeWidth="2"><path d="M16 30L6 19h6V3h8v16h6z" /></svg>],
  ["报价", <Boxed><path d="M5 8h9M5 13h9M5 18h9" stroke="#1e8a2e" strokeWidth="2" /><path d="M17 8h10M17 13h10" stroke="#d02020" strokeWidth="2" /><path d="M14 20l4 6 8-10M16 27h11V17" stroke="#777" strokeWidth="2" /></Boxed>],
  ["列表", <Boxed><path d="M5 7h6M5 12h6M5 17h6M5 22h6M5 26h6" stroke="#d02020" strokeWidth="2" /><path d="M13 7h6M13 12h6M13 17h6M13 22h6M13 26h6" stroke="#1e8a2e" strokeWidth="2" /><path d="M21 7h6M21 12h6M21 17h6M21 22h6M21 26h6" stroke="#2038b0" strokeWidth="2" /></Boxed>],
  ["走势", <Boxed><path d="M3 23l7-7 4 4 6-7 3 2 6-6" stroke="#d02020" strokeWidth="2" /></Boxed>],
  ["K线", <Boxed><path d="M7 10v14M24 4v16" stroke="#d02020" strokeWidth="2" /><path d="M15 7v19" stroke="#1e8a2e" strokeWidth="2" /><path d="M7 13v7M24 7v9" stroke="#d02020" strokeWidth="5" /><path d="M15 11v10" stroke="#1e8a2e" strokeWidth="5" /></Boxed>],
  ["多窗口", <svg className="size-8" viewBox="0 0 32 32" fill="#fff" stroke="#3a6cb8" strokeWidth="2"><path d="M8 3h23v20H8z" /><path d="M1 8h24v21H1z" /><path d="M5 15h7M14 15h7M5 19h7M14 19h7M5 24h7M14 24h7" stroke="#555" /></svg>],
  ["F10", <BoxedText text="F10" />],
  ["树", <Boxed><path d="M9 8v18h9M9 16h9" stroke="#3a6cb8" strokeWidth="2" /><path d="M6 5h9v7H6zM18 13h9v6h-9zM18 22h9v6h-9z" fill="#f4c03a" stroke="#c98a10" /></Boxed>],
  ["自选", <BoxedText text="自" orange />],
  ["F12", <BoxedText text="F12" />],
  ["公式", <span className="flex h-[30px] w-8 items-center justify-center rounded-md border-2 border-[#1f8a8a] bg-white text-base leading-none text-[#1d4fa0] italic">f(x)</span>],
  ["圆", <Boxed><circle cx="16" cy="16" r="7" stroke="#2f6ec0" strokeWidth="2" /></Boxed>],
  ["|", null],
  ["叠加", <Boxed><path d="M4 14l5-5 3 4 5-4 3 4 6-5" stroke="#d02020" strokeWidth="2" /><path d="M4 24l5-5 3 4 5-4 3 4 6-5" stroke="#2f4ec0" strokeWidth="2" /></Boxed>],
  ["RSI", <span className="text-lg font-bold text-[#2a48c8]">RSI</span>],
  ["资金", <svg className="size-8" viewBox="0 0 32 32" fill="none" stroke="#c04040" strokeWidth="5"><path d="M23 13c-2-4-13-5-13 0s13 3 13 8-12 5-14 1" /><path d="M10 7l6-6 6 6z" fill="#c04040" stroke="none" /></svg>],
  ["移动", <Move className="size-8 text-[#1c4fb0]" strokeWidth={3} />],
  ["画笔", <svg className="size-8" viewBox="0 0 32 32"><path d="M3 29l3-9 6 5z" fill="#d8b080" /><path d="M6 20L20 5l6 6-14 14z" fill="#f0a020" stroke="#8a5a10" /><path d="M20 5l3-3 6 6-3 3z" fill="#d84848" /></svg>],
  ["|", null],
  ["F5", <BoxedText text="F5" />],
  ["刷新", <Boxed><path d="M8 17a8 8 0 0 1 14-6M24 16a8 8 0 0 1-14 6" stroke="#3aa83a" strokeWidth="5" /><path d="M24 6v9h-8zM8 27v-9h8z" fill="#3aa83a" /></Boxed>],
];

const ToolStrip = () => (
  <aside className="flex w-[49px] flex-col items-stretch bg-[#f0f0f0] text-[22px] text-[#1a3a80]">
    {toolIcons.map(([name, icon], i) =>
      icon ? (
        <button key={name} aria-label={name} className="flex h-[46px] shrink-0 items-center justify-center">{icon}</button>
      ) : (
        <div key={i} className="mx-2 my-[7px] h-[2px] bg-[#999]" />
      ),
    )}
    {["1", "5", "15", "30", "60", "日", "周", "月", "N", "多", "季", "年"].map((t, i) => (
      <button key={t} className={i === 0 ? "h-[46px] border-t-2 border-l-2 border-[#999] bg-[#f8f8f8]" : "h-[46px]"}>{t}</button>
    ))}
  </aside>
);

/* ---------- status bar ---------- */

const Gauge: React.FC<{ color: string; split: string }> = ({ color, split }) => (
  <svg className="h-[30px] w-[100px]" viewBox="0 0 100 30" fill="none">
    <path d="M39 1h10v13H39z" fill="#e01010" />
    <path d={split} fill="#107a10" />
    <path d="M1 1h98v13H1zM25 1v13M75 1v13" stroke="#fff" strokeWidth="2" />
    <path d="M8 20h92M8 26h92" stroke={color} strokeWidth="4" strokeDasharray="12 4" />
  </svg>
);

const SogouMark: React.FC<{ className?: string }> = ({ className }) => (
  <svg className={className} viewBox="0 0 60 60" fill="none">
    <path d="M5 10L50 1q6-1 7 5l3 42q0 6-6 7L16 60q-6 0-7-6L1 17q-1-6 4-7z" fill="#f0521c" />
    <path d="M46 15C32 9 14 16 17 25c3 8 27 3 27 12 0 8-18 12-31 6" stroke="#fff" strokeWidth="8" />
  </svg>
);

const ImeBar = () => (
  <div className="relative ml-auto flex h-[50px] w-[335px] items-center justify-between bg-white pr-[10px] pl-[54px] text-[#0a6cd6]">
    <SogouMark className="absolute -top-[10px] -left-5 size-[62px]" />
    <button className="text-[32px] leading-none font-bold">中</button>
    <button aria-label="标点">
      <svg className="size-7" viewBox="0 0 28 28" fill="none" stroke="currentColor" strokeWidth="3"><circle cx="7" cy="8" r="3.500" /><path d="M21 14v3q0 5-4 6" strokeWidth="5" /></svg>
    </button>
    <button aria-label="语音"><FaMicrophone className="size-8" /></button>
    <button aria-label="键盘">
      <svg className="h-7 w-8" viewBox="0 0 32 28"><rect width="32" height="28" rx="3" fill="currentColor" /><path d="M5 8h23M5 14h23" stroke="#fff" strokeWidth="3" strokeDasharray="4 2" /><path d="M5 21h22" stroke="#fff" strokeWidth="3" /></svg>
    </button>
    <button aria-label="皮肤"><FaTshirt className="size-8" /></button>
    <button aria-label="工具"><BsGridFill className="size-7" /></button>
  </div>
);

const StatusBar = () => (
  <div className="flex h-[51px] items-center bg-[#2f343f] text-2xl whitespace-nowrap text-[#eef0f2]">
    <button className="flex w-[160px] items-center gap-3 pl-[13px]">
      <ChevronsUp className="size-7 rounded-full bg-[#d8dde2] p-1 text-[#2f343f]" strokeWidth={3} />
      显示快捷
    </button>
    {indexes.map((x) => (
      <div key={x.name} className="grid grid-cols-[57px_90px_80px_104px_109px]">
        <span>{x.name}</span>
        <span className="text-[#35b878]">{x.value}</span>
        <span className="text-right text-[#35b878]">{x.change}</span>
        <span className="text-right text-[#35b878]">{x.pct}</span>
        <span className="pl-[14px]">{x.amount}</span>
      </div>
    ))}
    <div className="ml-[6px] flex gap-1">
      <Gauge color="#107a10" split="M49 1h9v13h-9z" />
      <Gauge color="#e01010" split="M49 1h5v13h-5z" />
    </div>
    <svg className="ml-[18px] size-8" viewBox="0 0 32 32" fill="none" stroke="#c8ccd2" strokeWidth="2">
      <path d="M16 12v18M10 17a7 7 0 0 1 0-10M22 17a7 7 0 0 0 0-10M6 20a11 11 0 0 1 0-17M26 20a11 11 0 0 0 0-17" />
      <circle cx="16" cy="12" r="2" fill="#c8ccd2" />
    </svg>
    <span className="ml-[10px] flex h-7 w-7 items-center justify-center rounded-sm bg-[#338bff] text-white">1</span>
    <span className="ml-2">已连接</span>
    <ImeBar />
  </div>
);

/* ---------- taskbar ---------- */

const WeChat: React.FC<{ className?: string }> = ({ className }) => (
  <svg className={className} viewBox="0 0 48 48">
    <path d="M18 4C8 4 1 10 1 18c0 5 3 9 6 11l-1 6 6-3c2 1 4 1 6 1 9 0 17-6 17-15S28 4 18 4z" fill="#3ddc6c" />
    <circle cx="12" cy="14" r="2" fill="#0c5a28" /><circle cx="24" cy="14" r="2" fill="#0c5a28" />
    <path d="M33 17c-8 0-14 5-14 12s6 12 14 12c2 0 4 0 6-1l5 3-1-5c3-2 4-5 4-9 0-7-6-12-14-12z" fill="#eceff1" />
    <circle cx="28" cy="26" r="2" fill="#555" /><circle cx="38" cy="26" r="2" fill="#555" />
  </svg>
);

const apps: [string, React.ReactNode][] = [
  ["纸牌", <svg className="size-12" viewBox="0 0 48 48" stroke="#c01818" strokeWidth="1.500"><path d="M2 18l12-8 14 26-12 8z" fill="#fff" /><path d="M7 10l12-6 10 30-12 6z" fill="#fff" /><path d="M15 4l14 0 2 34-14 0z" fill="#fff" /><path d="M28 3l14 8-10 30-12-6z" fill="#fff" /><path d="M22 13h24v32H22z" fill="#fff" stroke="none" /><path d="M34 20c3 6 8 8 7 13-1 3-5 3-6 1l2 5h-6l2-5c-1 2-5 2-6-1-1-5 4-7 7-13z" fill="#a01010" stroke="none" /></svg>],
  ["Edge", <svg className="size-12" viewBox="0 0 48 48"><defs><linearGradient id="edge" x2="1"><stop stopColor="#1a9be8" /><stop offset="1" stopColor="#5ce070" /></linearGradient></defs><circle cx="24" cy="24" r="23" fill="#1166b8" /><path d="M1 24C2 10 12 1 25 1s22 9 22 18-7 13-13 13-7-3-4-6 0-11-8-11S4 18 1 24z" fill="url(#edge)" /><path d="M18 22c-6 8 0 19 12 19 6 0 10-2 14-5-5 10-17 13-26 9S9 26 18 22z" fill="#1f88d8" /><path d="M30 26c-6 4 1 9 8 8 4-1 7-2 9-4-1 4-3 6-5 8-8 2-19-1-19-9 0-4 3-6 7-3z" fill="#12262e" /></svg>],
  ["海通", <HaitongMark className="size-12 text-[#1565b0]" />],
  ["光大", <svg className="size-12" viewBox="0 0 48 48"><path d="M44 2C20 2 4 14 1 32c-1 10 12 16 20 10 5-4 5-10 2-16-3-7 7-19 21-24z" fill="#e60d20" /><path d="M42 6c-14 2-20 12-17 18 8-4 10 2 6 7-1 5-4 10-6 13C42 38 50 24 47 8q-1-3-5-2z" fill="#122a86" /></svg>],
  ["中金", <svg className="size-12" viewBox="0 0 48 48" fill="none" stroke="#fff" strokeWidth="2"><rect width="48" height="48" rx="8" fill="#2a6ee8" stroke="none" /><circle cx="20" cy="24" r="8" /><path d="M31 10H20a14 14 0 1 0 0 28h11l4-5h-9M31 10l-3 6M28 16l12-1-5 6h-6M29 24h14l-5 5h-9" /></svg>],
  ["国信", <svg className="size-12" viewBox="0 0 48 48"><path d="M2 28L17 13l10 16z" fill="#0f4a78" /><path d="M20 9q3-5 8-1 3-4 7-1l1 3q6-1 9 3L29 30z" fill="#e60d18" /><text x="24" y="45" fontSize="10" fill="#3a4850" textAnchor="middle">GUOSEN</text></svg>],
  ["B", <svg className="size-12" viewBox="0 0 48 48"><defs><linearGradient id="bank" x1="0" y1="1" x2="1" y2="0"><stop stopColor="#e01c20" /><stop offset="1" stopColor="#f8a860" /></linearGradient></defs><path d="M6 0h28q6 0 8 6v10q0 6-4 8 4 2 4 8v8q-2 8-8 8H6z" fill="url(#bank)" /><path d="M22 9h22M14 13h28M14 17h26M22 21h22M14 28h28M22 32h20M14 36h28M18 40h24M30 5h14M30 44h14" stroke="#12262e" strokeWidth="1.500" /></svg>],
  ["花", <svg className="size-12" viewBox="0 0 48 48"><path d="M21 0c6 7 5 11 1 16-6-3-6-9-1-16z" fill="#a8164c" /><path d="M48 9c0 12-6 20-16 19-5-1-7-5-6-9 4-8 12-10 22-10z" fill="#f08c0c" /><path d="M26 29c9 0 13 5 11 14-7 1-13-5-11-14z" fill="#a8164c" /><path d="M3 48c-4-8 1-16 11-16 4 2 4 7 2 10-3 4-7 4-13 6z" fill="#555" /><path d="M1 8c8-1 13 4 14 11C6 21 1 17 1 8z" fill="#555" /><ellipse cx="9" cy="26" rx="7" ry="3" fill="#f08c0c" transform="rotate(-12 9 26)" /></svg>],
  ["中信", <svg className="size-12" viewBox="0 0 48 48" fill="none" stroke="#8c1014" strokeWidth="2"><circle cx="24" cy="24" r="23" fill="#d0181c" stroke="none" /><circle cx="24" cy="24" r="20" /><path d="M16 40V9h16v31M21 42V14l3-5 3 5v28M10 36V12M38 36V12M5 24l4-4v8zM43 24l-4-4v8z" stroke="#2a1a20" /></svg>],
  ["大智慧", <svg className="size-12" viewBox="0 0 48 48"><defs><linearGradient id="dzh" x2="1" y2="1"><stop stopColor="#8adcff" /><stop offset="1" stopColor="#0e62c8" /></linearGradient></defs><circle cx="24" cy="24" r="23" fill="url(#dzh)" /><path d="M14 5q18-8 30 8l-8 4q-8-10-22-4z" fill="#0e58c0" /><path d="M2 16h16M1 22h16M1 28h16M3 34h16" stroke="#d8f4ff" strokeWidth="2" /><path d="M18 15h12q3 0 3 3v14q0 3-3 3H18z" fill="#12262e" /></svg>],
  ["微信", <WeChat className="size-12" />],
];

const Taskbar = () => (
  <footer className="flex h-[95px] items-center border-t-2 border-[#2e444d] bg-[#12262e] text-2xl whitespace-nowrap text-white">
    <div className="flex w-[578px] items-center gap-[14px] pl-[37px]">
      <div className="relative">
        <svg className="h-16 w-12" viewBox="0 0 48 64"><circle cx="34" cy="34" r="12" fill="#f0a040" /><path d="M10 58a10 11 0 0 1 1-22 14 14 0 0 1 26 2 10 10 0 0 1 1 20z" fill="#c4d6f6" /></svg>
        <span className="absolute -top-1 left-6 flex size-8 items-center justify-center rounded-full bg-[#c42b1c] text-xl">1</span>
      </div>
      <div className="leading-8">
        <div>6°C</div>
        <div className="text-[#b8c4c8]">多云</div>
      </div>
    </div>
    <button aria-label="开始">
      <svg className="size-[46px]" viewBox="0 0 46 46"><path d="M0 0h22v22H0zM24 0h22v22H24zM0 24h22v22H0zM24 24h22v22H24z" fill="#38b4f8" /></svg>
    </button>
    <button className="ml-7 flex h-16 w-[200px] items-center justify-center gap-2 rounded-full bg-[#20353d]">
      <Search className="size-8" />搜索
    </button>
    <button aria-label="任务视图" className="ml-[26px]">
      <svg className="size-12" viewBox="0 0 48 48"><path d="M12 2h36v32H12z" fill="#f4f4f4" /><path d="M0 14h36v30H0z" fill="#8a8a8a" opacity=".85" /></svg>
    </button>
    <button aria-label="计算器" className="ml-10">
      <svg className="size-12" viewBox="0 0 48 48"><rect x="5" width="38" height="48" rx="3" fill="#76868e" /><path d="M9 4h30v9H9z" fill="#58d0f0" /><path d="M9 17h8v7H9zM20 17h8v7h-8zM31 17h8v7h-8zM9 27h8v7H9zM20 27h8v7h-8zM9 37h8v7H9zM20 37h8v7h-8z" fill="#e0e6ea" /><path d="M31 27h8v17h-8z" fill="#1a5cb8" /></svg>
    </button>
    <div className="ml-5 flex">
      {apps.map(([name, icon]) => (
        <button key={name} aria-label={name} className="relative flex h-20 w-[88px] items-center justify-center">
          {icon}
          <i className="absolute bottom-0 h-[6px] w-3 rounded-full bg-[#8e9a9f]" />
        </button>
      ))}
    </div>
    <div className="ml-auto flex items-center">
      <button aria-label="隐藏图标" className="flex w-16 justify-center"><ChevronUp className="size-9" /></button>
      <span className="flex w-16 justify-center"><WeChat className="size-9" /></span>
      <span className="flex w-16 justify-center">
        <svg className="size-9" viewBox="0 0 36 36" fill="none" stroke="#fff" strokeWidth="4"><path d="M4 10v22M10 32V12l8 12 8-12v20M32 14v18" strokeWidth="3" /><circle cx="30" cy="5" r="5" fill="#e04838" stroke="none" /></svg>
      </span>
      <span className="flex w-16 justify-center">
        <svg className="size-9" viewBox="0 0 36 36"><path d="M8 28a8 8 0 0 1 0-15 10 10 0 0 1 19-2 8 8 0 0 1 2 16z" fill="#b4b8bc" /><circle cx="25" cy="26" r="9" fill="#fff" /><path d="M20 25a5 5 0 0 1 9-2M30 27a5 5 0 0 1-9 2" stroke="#1a70c8" strokeWidth="2" fill="none" /></svg>
      </span>
      <span className="flex w-16 justify-center">
        <svg className="size-9" viewBox="0 0 36 36"><path d="M16 2l13 5v9c0 9-6 14-13 18C9 30 3 25 3 16V7z" fill="#2a9ae8" /><circle cx="25" cy="26" r="9" fill="#0f8a3c" /><path d="M20 26l4 4 6-7" stroke="#fff" strokeWidth="2.500" fill="none" /></svg>
      </span>
      <span className="flex w-16 justify-center">
        <svg className="size-8" viewBox="0 0 32 32" fill="none" stroke="#fff" strokeWidth="4"><path d="M2 9h28M2 23h28" /><path d="M21 4v10M11 18v10" strokeWidth="6" /></svg>
      </span>
      <span className="flex w-16 justify-center">
        <svg className="size-8" viewBox="0 0 32 32" fill="none"><path d="M12 3h20v26H12z" fill="#76a818" /><path d="M0 3h12v26H0z" fill="#34452c" /><path d="M4 15c6-8 16-8 22 0-6 9-16 9-22 0zM10 15c3-4 8-4 11 0-3 4-8 4-11 0z" stroke="#24381c" strokeWidth="3" /></svg>
      </span>
      <span className="flex w-16 justify-center text-[32px] font-bold">中</span>
      <span className="flex w-[87px] justify-center"><SogouMark className="size-8" /></span>
      <span className="flex w-14 justify-center"><Wifi className="size-8" /></span>
      <span className="flex w-12 justify-center"><Volume2 className="size-8" /></span>
      <span className="flex w-12 justify-center">
        <svg className="size-8" viewBox="0 0 32 32" fill="none" stroke="#fff" strokeWidth="2.500"><path d="M12 8h12q4 0 4 4v12q0 3-4 3H6q-4 0-4-4v-4M30 14v7" /><path d="M12 13h11v9H8v-3z" fill="#fff" /><path d="M7 1L2 9h6l-4 7" /></svg>
      </span>
      <div className="w-[136px] text-right leading-8">
        <div>14:59</div>
        <div>2023/2/23</div>
      </div>
      <span className="mr-[39px] ml-[14px] flex size-8 items-center justify-center rounded-full bg-[#4cc2ff] text-xl text-[#10303c]">2</span>
    </div>
  </footer>
);

const App: React.FC = () => {
  return (
    <div className="flex min-h-screen flex-col bg-black [font-family:'Liberation_Sans','Noto_Sans_CJK_SC',sans-serif]">
      <Header />
      <MarketTabs />
      <main className="flex">
        <div className="flex min-w-0 flex-1 flex-col">
          <PeriodBar />
          <PricePane />
          <VolumePane />
          <MacdPane />
          <TimeAxis />
          <IndicatorBar />
          <NewsBar />
        </div>
        <QuotePanel />
        <ToolStrip />
      </main>
      <StatusBar />
      <Taskbar />
    </div>
  );
};

export default App;
